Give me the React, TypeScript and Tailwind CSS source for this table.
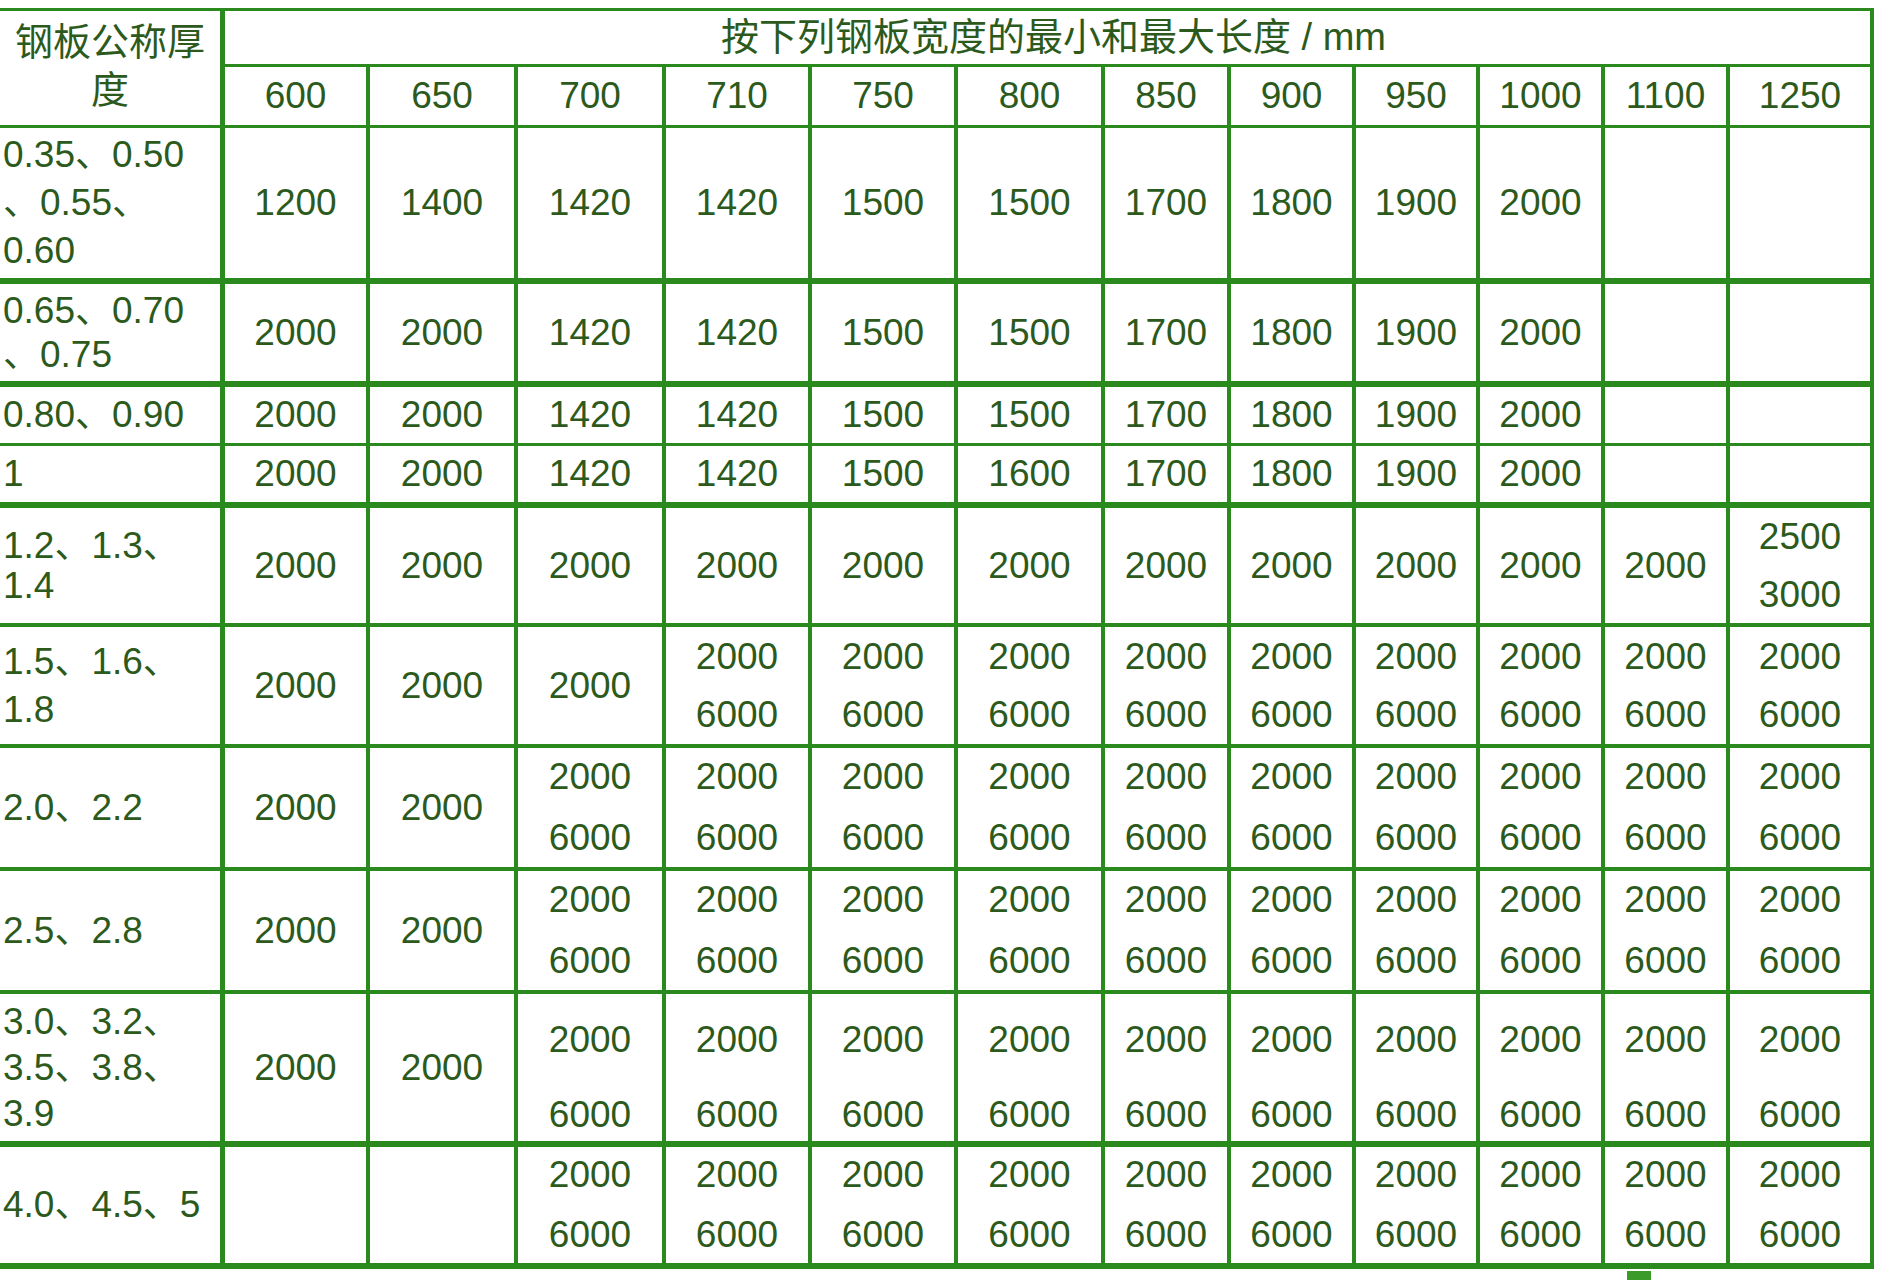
const LINE = "border-[#2a8a1e]";
const FONT = "font-['Liberation_Sans','Noto_Sans_CJK_SC',sans-serif]";

const widths = [
  "w-[145px]",
  "w-[148px]",
  "w-[148px]",
  "w-[146px]",
  "w-[146px]",
  "w-[147px]",
  "w-[126px]",
  "w-[125px]",
  "w-[124px]",
  "w-[125px]",
  "w-[125px]",
  "w-[144px]",
];

const heads = ["600", "650", "700", "710", "750", "800", "850", "900", "950", "1000", "1100", "1250"];

type Val = string | [string, string];

type Row = {
  label: string[];
  leading: string;
  h: string;
  bb: string;
  pair: string;
  values: Val[];
};

const P: [string, string] = ["2000", "6000"];

const rows: Row[] = [
  {
    label: ["0.35、0.50", "、0.55、", "0.60"],
    leading: "leading-[48px]",
    h: "h-[156px]",
    bb: "border-b-[6px]",
    pair: "",
    values: ["1200", "1400", "1420", "1420", "1500", "1500", "1700", "1800", "1900", "2000", "", ""],
  },
  {
    label: ["0.65、0.70", "、0.75"],
    leading: "leading-[44px]",
    h: "h-[103px]",
    bb: "border-b-[6px]",
    pair: "",
    values: ["2000", "2000", "1420", "1420", "1500", "1500", "1700", "1800", "1900", "2000", "", ""],
  },
  {
    label: ["0.80、0.90"],
    leading: "leading-[44px]",
    h: "h-[59px]",
    bb: "border-b-[3px]",
    pair: "",
    values: ["2000", "2000", "1420", "1420", "1500", "1500", "1700", "1800", "1900", "2000", "", ""],
  },
  {
    label: ["1"],
    leading: "leading-[44px]",
    h: "h-[62px]",
    bb: "border-b-[6px]",
    pair: "",
    values: ["2000", "2000", "1420", "1420", "1500", "1600", "1700", "1800", "1900", "2000", "", ""],
  },
  {
    label: ["1.2、1.3、", "1.4"],
    leading: "leading-[40px]",
    h: "h-[119px]",
    bb: "border-b-[4px]",
    pair: "gap-[18px]",
    values: ["2000", "2000", "2000", "2000", "2000", "2000", "2000", "2000", "2000", "2000", "2000", ["2500", "3000"]],
  },
  {
    label: ["1.5、1.6、", "1.8"],
    leading: "leading-[48px]",
    h: "h-[121px]",
    bb: "border-b-[4px]",
    pair: "gap-[18px]",
    values: ["2000", "2000", "2000", P, P, P, P, P, P, P, P, P],
  },
  {
    label: ["2.0、2.2"],
    leading: "leading-[44px]",
    h: "h-[123px]",
    bb: "border-b-[4px]",
    pair: "gap-[21px]",
    values: ["2000", "2000", P, P, P, P, P, P, P, P, P, P],
  },
  {
    label: ["2.5、2.8"],
    leading: "leading-[44px]",
    h: "h-[123px]",
    bb: "border-b-[4px]",
    pair: "gap-[21px]",
    values: ["2000", "2000", P, P, P, P, P, P, P, P, P, P],
  },
  {
    label: ["3.0、3.2、", "3.5、3.8、", "3.9"],
    leading: "leading-[46px]",
    h: "h-[153px]",
    bb: "border-b-[6px]",
    pair: "gap-[35px] pt-[20px]",
    values: ["2000", "2000", P, P, P, P, P, P, P, P, P, P],
  },
  {
    label: ["4.0、4.5、5"],
    leading: "leading-[44px]",
    h: "h-[122px]",
    bb: "border-b-[6px]",
    pair: "gap-[20px]",
    values: ["", "", P, P, P, P, P, P, P, P, P, P],
  },
];

function Cell({ w, value, pair }: { w: string; value: Val; pair: string }) {
  return (
    <div className={`flex shrink-0 flex-col items-center justify-center border-r-4 ${LINE} ${w}`}>
      {Array.isArray(value) ? (
        <div className={`flex flex-col items-center ${pair}`}>
          <span className="leading-[40px]">{value[0]}</span>
          <span className="leading-[40px]">{value[1]}</span>
        </div>
      ) : (
        <span className="leading-[40px]">{value}</span>
      )}
    </div>
  );
}

export default function App() {
  return (
    <div className={`h-[1280px] w-[1881px] overflow-hidden bg-white text-[37px] text-[#2c5a1c] ${FONT}`}>
      <div className="h-[8px]" />
      <div className={`w-[1874px] border-t-[3px] ${LINE}`}>
        {/* header */}
        <div className="flex">
          <div
            className={`flex h-[117px] w-[225px] shrink-0 flex-col items-center justify-center border-r-[5px] border-b-[3px] pb-[4px] text-[38px] leading-[48px] ${LINE}`}
          >
            <span>钢板公称厚</span>
            <span>度</span>
          </div>
          <div className="flex flex-col">
            <div
              className={`flex h-[56px] items-center justify-center border-r-4 border-b-[3px] pl-[12px] text-[38px] ${LINE}`}
            >
              按下列钢板宽度的最小和最大长度 / mm
            </div>
            <div className={`flex h-[61px] border-b-[3px] ${LINE}`}>
              {heads.map((h, i) => (
                <Cell key={h} w={widths[i]} value={h} pair="" />
              ))}
            </div>
          </div>
        </div>

        {rows.map((r, ri) => (
          <div key={ri} className={`flex ${r.h} ${r.bb} ${LINE}`}>
            <div
              className={`flex w-[225px] shrink-0 flex-col justify-center border-r-[5px] pl-[3px] ${r.leading} ${LINE}`}
            >
              {r.label.map((l, li) => (
                <span key={li} className="whitespace-nowrap">
                  {l}
                </span>
              ))}
            </div>
            {r.values.map((v, i) => (
              <Cell key={i} w={widths[i]} value={v} pair={r.pair} />
            ))}
          </div>
        ))}
      </div>
      <div className="ml-[1627px] mt-[2px] h-[10px] w-[24px] bg-[#3a9a2a]" />
    </div>
  );
}
